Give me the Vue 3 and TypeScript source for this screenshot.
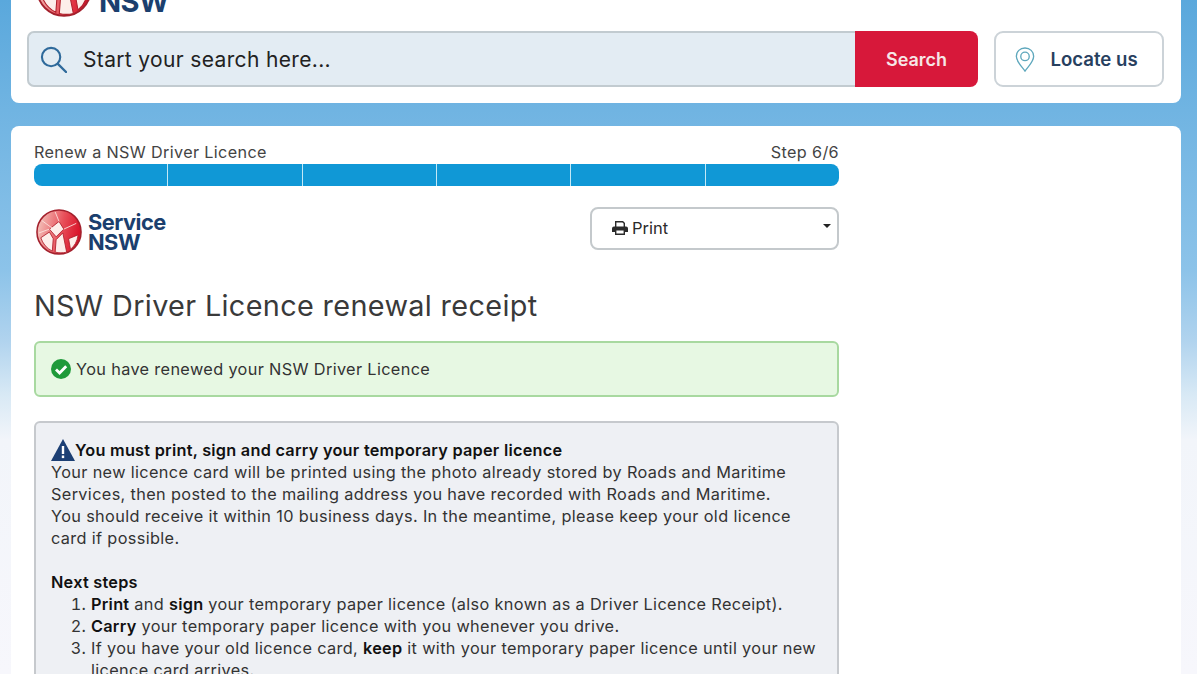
<script setup lang="ts">
const segments = [1, 2, 3, 4, 5, 6]
</script>

<template>
  <div class="page">
    <header class="top">
      <div class="brand-row">
        <div class="logo top-logo">
          <svg class="globe" viewBox="0 0 48 48" aria-hidden="true">
            <defs>
              <linearGradient id="g1" x1="0.05" y1="0.35" x2="0.95" y2="0.55">
                <stop offset="0" stop-color="#f2b9b3" />
                <stop offset="0.55" stop-color="#e8505a" />
                <stop offset="1" stop-color="#d9142a" />
              </linearGradient>
            </defs>
            <circle cx="24" cy="24" r="23" fill="url(#g1)" stroke="#a3202c" stroke-width="1.6" />
            <path d="M5 30 L14 24 L18 31 L17 44 C11 41 7 36 5 30 Z M14 21 L24 13 L29 21 L21 29 Z M21 32 L28 25 L32 45 C28 46 24 46 20 45 Z M34 31 L44 27 C43 34 40 39 36 42 Z" fill="#fdeeea" stroke="#b0202c" stroke-width="0.9" />
            <path d="M3 25 L14 21 M6 12 L17 20 M20 3 L24 13 M29 21 L42 15" fill="none" stroke="#fbe3df" stroke-width="0.9" />
          </svg>
          <div class="wordmark"><span>Service</span><span>NSW</span></div>
        </div>
      </div>
      <div class="search-row">
        <div class="search">
          <div class="search-field">
            <svg class="search-icon" viewBox="0 0 28 28" aria-hidden="true">
              <circle cx="11.5" cy="11.5" r="9.5" fill="none" stroke="#2f6a9b" stroke-width="2.2" />
              <path d="M18.5 18.5 L27 27" stroke="#2f6a9b" stroke-width="2.4" stroke-linecap="round" />
            </svg>
            <span>Start your search here...</span>
          </div>
          <button class="search-btn" type="button">Search</button>
        </div>
        <button class="locate" type="button">
          <svg class="pin" viewBox="0 0 20 26" aria-hidden="true">
            <path d="M10 1 C4.8 1 1 4.8 1 9.6 C1 15.5 7 20.5 10 25 C13 20.5 19 15.5 19 9.6 C19 4.8 15.2 1 10 1 Z" fill="none" stroke="#5fa8bd" stroke-width="1.4" />
            <circle cx="10" cy="9.8" r="4.4" fill="none" stroke="#5fa8bd" stroke-width="1.4" />
          </svg>
          <span>Locate us</span>
        </button>
      </div>
    </header>

    <main class="card">
      <div class="content">
        <div class="step-row">
          <span>Renew a NSW Driver Licence</span>
          <span>Step 6/6</span>
        </div>
        <div class="progress">
          <div v-for="s in segments" :key="s" class="segment"></div>
        </div>

        <div class="brand-print">
          <div class="logo">
            <svg class="globe small" viewBox="0 0 48 48" aria-hidden="true">
              <circle cx="24" cy="24" r="23" fill="url(#g1)" stroke="#a3202c" stroke-width="1.6" />
              <path d="M5 30 L14 24 L18 31 L17 44 C11 41 7 36 5 30 Z M14 21 L24 13 L29 21 L21 29 Z M21 32 L28 25 L32 45 C28 46 24 46 20 45 Z M34 31 L44 27 C43 34 40 39 36 42 Z" fill="#fdeeea" stroke="#b0202c" stroke-width="0.9" />
              <path d="M3 25 L14 21 M6 12 L17 20 M20 3 L24 13 M29 21 L42 15" fill="none" stroke="#fbe3df" stroke-width="0.9" />
            </svg>
            <div class="wordmark small"><span>Service</span><span>NSW</span></div>
          </div>
          <button class="print" type="button">
            <svg class="printer" viewBox="0 0 16 16" aria-hidden="true">
              <path d="M3 1 H11 L13 3 V7 H11.6 V3.6 L10.4 2.4 H4.4 V7 H3 Z" fill="#2b2b2b" />
              <path d="M2 6.5 H14 A2 2 0 0 1 16 8.5 V12 H13 V15 H3 V12 H0 V8.5 A2 2 0 0 1 2 6.5 Z M4.4 10.5 V13.6 H11.6 V10.5 Z" fill="#2b2b2b" fill-rule="evenodd" />
            </svg>
            <span>Print</span>
            <i class="caret"></i>
          </button>
        </div>

        <h1>NSW Driver Licence renewal receipt</h1>

        <div class="success">
          <svg class="check" viewBox="0 0 20 20" aria-hidden="true">
            <circle cx="10" cy="10" r="10" fill="#1f9a3a" />
            <path d="M5 10.4 L8.6 14 L15.2 7.2" fill="none" stroke="#fff" stroke-width="2.8" />
          </svg>
          <span>You have renewed your NSW Driver Licence</span>
        </div>

        <section class="notice">
          <div class="notice-title">
            <svg class="warn" viewBox="0 0 24 22" aria-hidden="true">
              <path d="M12 0 L24 22 H0 Z" fill="#1c3f74" />
              <rect x="10.8" y="7" width="2.4" height="8" fill="#fff" />
              <rect x="10.8" y="16.5" width="2.4" height="2.6" fill="#fff" />
            </svg>
            <strong>You must print, sign and carry your temporary paper licence</strong>
          </div>
          <p>Your new licence card will be printed using the photo already stored by Roads and Maritime Services, then posted to the mailing address you have recorded with Roads and Maritime.<br />You should receive it within 10 business days. In the meantime, please keep your old licence card if possible.</p>
          <p class="next"><strong>Next steps</strong></p>
          <ol>
            <li><strong>Print</strong> and <strong>sign</strong> your temporary paper licence (also known as a Driver Licence Receipt).</li>
            <li><strong>Carry</strong> your temporary paper licence with you whenever you drive.</li>
            <li>If you have your old licence card, <strong>keep</strong> it with your temporary paper licence until your new licence card arrives.</li>
          </ol>
        </section>
      </div>
    </main>
  </div>
</template>

<style>
html, body { margin: 0; overflow: hidden; background: #fff; }
</style>

<style scoped>
* { box-sizing: border-box; }
.page {
  height: 674px;
  overflow: hidden;
  padding: 0 16px 0 11px;
  background: linear-gradient(#5aa8dc 0, #70b4e2 110px, #8cc3e9 270px, #b0d3ee 340px, #d8e9f5 395px, #f2f5fa 440px, #f7f7fc 674px);
  font-family: Inter, sans-serif;
  color: #2b2b2b;
  letter-spacing: 0.35px;
}
.top {
  height: 103px;
  background: #fff;
  border-radius: 0 0 8px 8px;
  padding: 0 16px;
  overflow: hidden;
}
.brand-row { height: 31px; overflow: hidden; }
.top-logo { margin-top: -40px; margin-left: 9px; gap: 10px; }
.logo { display: flex; align-items: center; gap: 7px; }
.globe { width: 56px; height: 58px; flex: none; }
.globe.small { width: 46px; height: 46px; }
.wordmark {
  display: flex;
  flex-direction: column;
  color: #1b3f6e;
  font-family: Inter, sans-serif;
  font-weight: 700;
  font-size: 29px;
  line-height: 25px;
  letter-spacing: -0.6px;
}
.wordmark.small {
  font-size: 21.8px;
  line-height: 20px;
  letter-spacing: -0.5px;
}
.search-row { display: flex; gap: 16px; }
.search { display: flex; width: 951px; height: 56px; }
.search-field {
  flex: 1;
  display: flex;
  align-items: center;
  gap: 16px;
  padding-left: 11px;
  background: #e3ecf3;
  border: 2px solid #c2cbd0;
  border-right: 0;
  border-radius: 7px 0 0 7px;
  font-size: 21px;
  color: #222;
}
.search-icon { width: 27px; height: 27px; flex: none; }
.search-btn {
  width: 123px;
  border: 0;
  border-radius: 0 8px 8px 0;
  background: #d7183a;
  color: #f6e6e6;
  font: 600 18px Inter, sans-serif;
}
.locate {
  width: 170px;
  height: 56px;
  display: flex;
  align-items: center;
  justify-content: center;
  gap: 15px;
  padding: 0 5px 0 0;
  background: #fff;
  border: 2px solid #ccd3d8;
  border-radius: 9px;
  color: #27405f;
  font: 600 18.6px Inter, sans-serif;
}
.pin { width: 20px; height: 25px; }
.card {
  margin-top: 23px;
  height: 600px;
  background: #fff;
  border-radius: 8px 8px 0 0;
  padding: 16px 23px;
}
.content { width: 805px; }
.step-row {
  display: flex;
  justify-content: space-between;
  font-size: 16.2px;
  line-height: 20px;
  color: #444;
}
.progress {
  display: flex;
  height: 22px;
  margin-top: 2px;
  border-radius: 8px;
  overflow: hidden;
  background: #1098d6;
}
.segment { flex: 1; border-right: 1px solid #c3e8f6; }
.segment:last-child { border-right: 0; }
.brand-print {
  display: flex;
  justify-content: space-between;
  align-items: flex-start;
  margin-top: 21px;
}
.brand-print .logo { margin: 2px 0 0 2px; gap: 6px; }
.print {
  position: relative;
  width: 249px;
  height: 43px;
  display: flex;
  align-items: center;
  gap: 4px;
  padding: 0 0 2px 20px;
  background: #fff;
  border: 2px solid #c4c9cc;
  border-radius: 8px;
  color: #2b2b2b;
  font: 400 16.5px Inter, sans-serif;
}
.printer { width: 16px; height: 16px; }
.caret {
  position: absolute;
  right: 6px;
  top: 15px;
  border: 4.5px solid transparent;
  border-top-color: #222;
  border-bottom: 0;
}
h1 {
  margin: 33px 0 0;
  font-size: 28.8px;
  line-height: 36px;
  font-weight: 400;
  color: #3a3a3a;
}
.success {
  display: flex;
  align-items: center;
  gap: 5px;
  height: 56px;
  margin-top: 17px;
  padding-left: 15px;
  background: #e7f8e3;
  border: 2px solid #a8d9a0;
  border-radius: 6px;
  font-size: 16.3px;
  color: #333;
}
.check { width: 20px; height: 20px; flex: none; }
.notice {
  margin-top: 24px;
  padding: 16px 15px;
  background: #eef0f4;
  border: 2px solid #c6c9cd;
  border-radius: 6px;
  font-size: 16.3px;
  line-height: 22px;
  color: #333;
}
.notice strong { color: #111; font-weight: 600; letter-spacing: 0.25px; }
.notice-title { display: flex; align-items: center; height: 22px; }
.warn { width: 24px; height: 22px; flex: none; }
.notice p { margin: 0; }
.notice .next { margin-top: 22px; }
ol { margin: 0; padding: 0 0 0 40px; }
</style>
